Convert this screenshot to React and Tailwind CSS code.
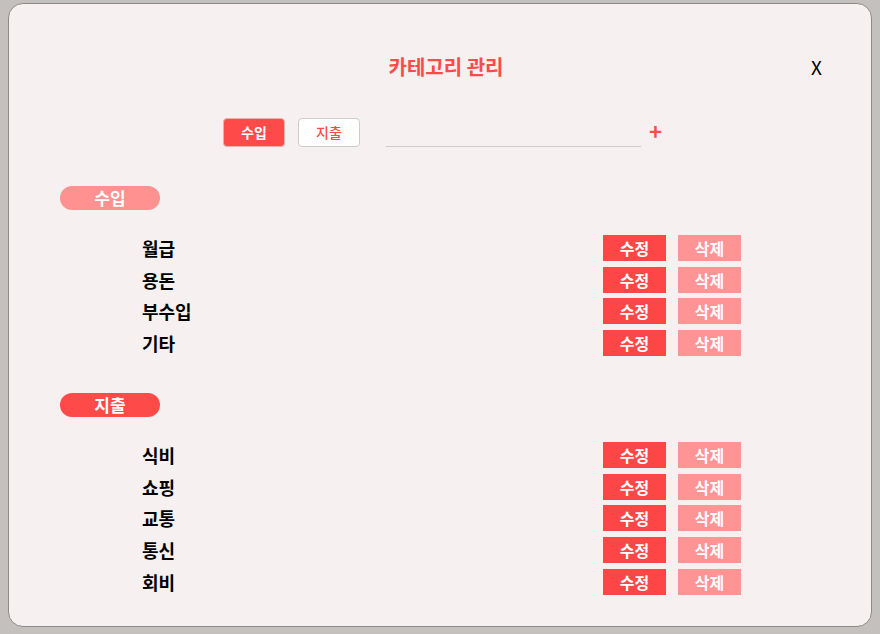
import React, { useState } from "react";

const income = ["월급", "용돈", "부수입", "기타"];
const expense = ["식비", "쇼핑", "교통", "통신", "회비"];

const Section = ({ title, items, active }) => (
  <div>
    <div
      className={
        active
          ? "w-[100px] h-[24px] rounded-full bg-[#ff4a4a] text-white text-[17px] font-bold flex items-center justify-center"
          : "w-[100px] h-[24px] rounded-full bg-[#ff9191] text-white text-[17px] font-bold flex items-center justify-center"
      }
    >
      {title}
    </div>
    <div className="mt-[25px] ml-[82px] w-[599px] flex flex-col gap-[5.7px]">
      {items.map((item) => (
        <div key={item} className="h-[26px] flex items-center justify-between">
          <span className="text-[18px] leading-[24px] font-bold text-black">{item}</span>
          <div className="flex gap-[12px]">
            <button className="w-[63px] h-[26px] bg-[#ff4646] text-white text-[16px] font-semibold flex items-center justify-center">
              수정
            </button>
            <button className="w-[63px] h-[26px] bg-[#ff9494] text-white text-[16px] font-semibold flex items-center justify-center">
              삭제
            </button>
          </div>
        </div>
      ))}
    </div>
  </div>
);

const App = () => {
  const [tab, setTab] = useState("income");
  const [name, setName] = useState("");

  return (
    <div className="w-[880px] h-[634px] bg-[#c4c0bd] pt-[3px] px-[8px] font-['Noto_Sans_CJK_KR',sans-serif]">
      <div className="h-[624px] rounded-[15px] border border-[#8a8a8a] bg-[#f6f0f0]">
        <div className="relative pt-[49px] pl-[12px] flex justify-center">
          <h2 className="text-[20px] leading-[28px] font-bold text-[#ff4a4a] m-0">카테고리 관리</h2>
          <button className="absolute right-[49px] top-[50px] text-[19px] leading-[26px] text-black">
            X
          </button>
        </div>

        <div className="mt-[37px] pl-[214px] flex items-center">
          <button
            className={
              tab === "income"
                ? "w-[62px] h-[29px] rounded-[4px] border border-[#e8b0b0] bg-[#ff4a4a] text-white text-[14px] font-semibold"
                : "w-[62px] h-[29px] rounded-[4px] border border-[#cccccc] bg-white text-[#ff4a4a] text-[14px] font-semibold"
            }
            onClick={() => setTab("income")}
          >
            수입
          </button>
          <button
            className={
              tab === "expense"
                ? "ml-[13px] w-[62px] h-[29px] rounded-[4px] border border-[#e8b0b0] bg-[#ff4a4a] text-white text-[14px] font-semibold"
                : "ml-[13px] w-[62px] h-[29px] rounded-[4px] border border-[#cccccc] bg-white text-[#ff4a4a] text-[14px] font-medium"
            }
            onClick={() => setTab("expense")}
          >
            지출
          </button>
          <input
            className="ml-[26px] w-[255px] h-[29px] bg-transparent border-b border-[#cccccc] outline-none text-[14px]"
            value={name}
            onChange={(e) => setName(e.target.value)}
          />
          <button className="ml-[8px] text-[#ff4a4a] text-[22px] leading-[22px] font-bold -mt-[5px]">+</button>
        </div>

        <div className="mt-[39px] pl-[51px] flex flex-col gap-[37px]">
          <Section title="수입" items={income} />
          <Section title="지출" items={expense} active />
        </div>
      </div>
    </div>
  );
};

export default App;
